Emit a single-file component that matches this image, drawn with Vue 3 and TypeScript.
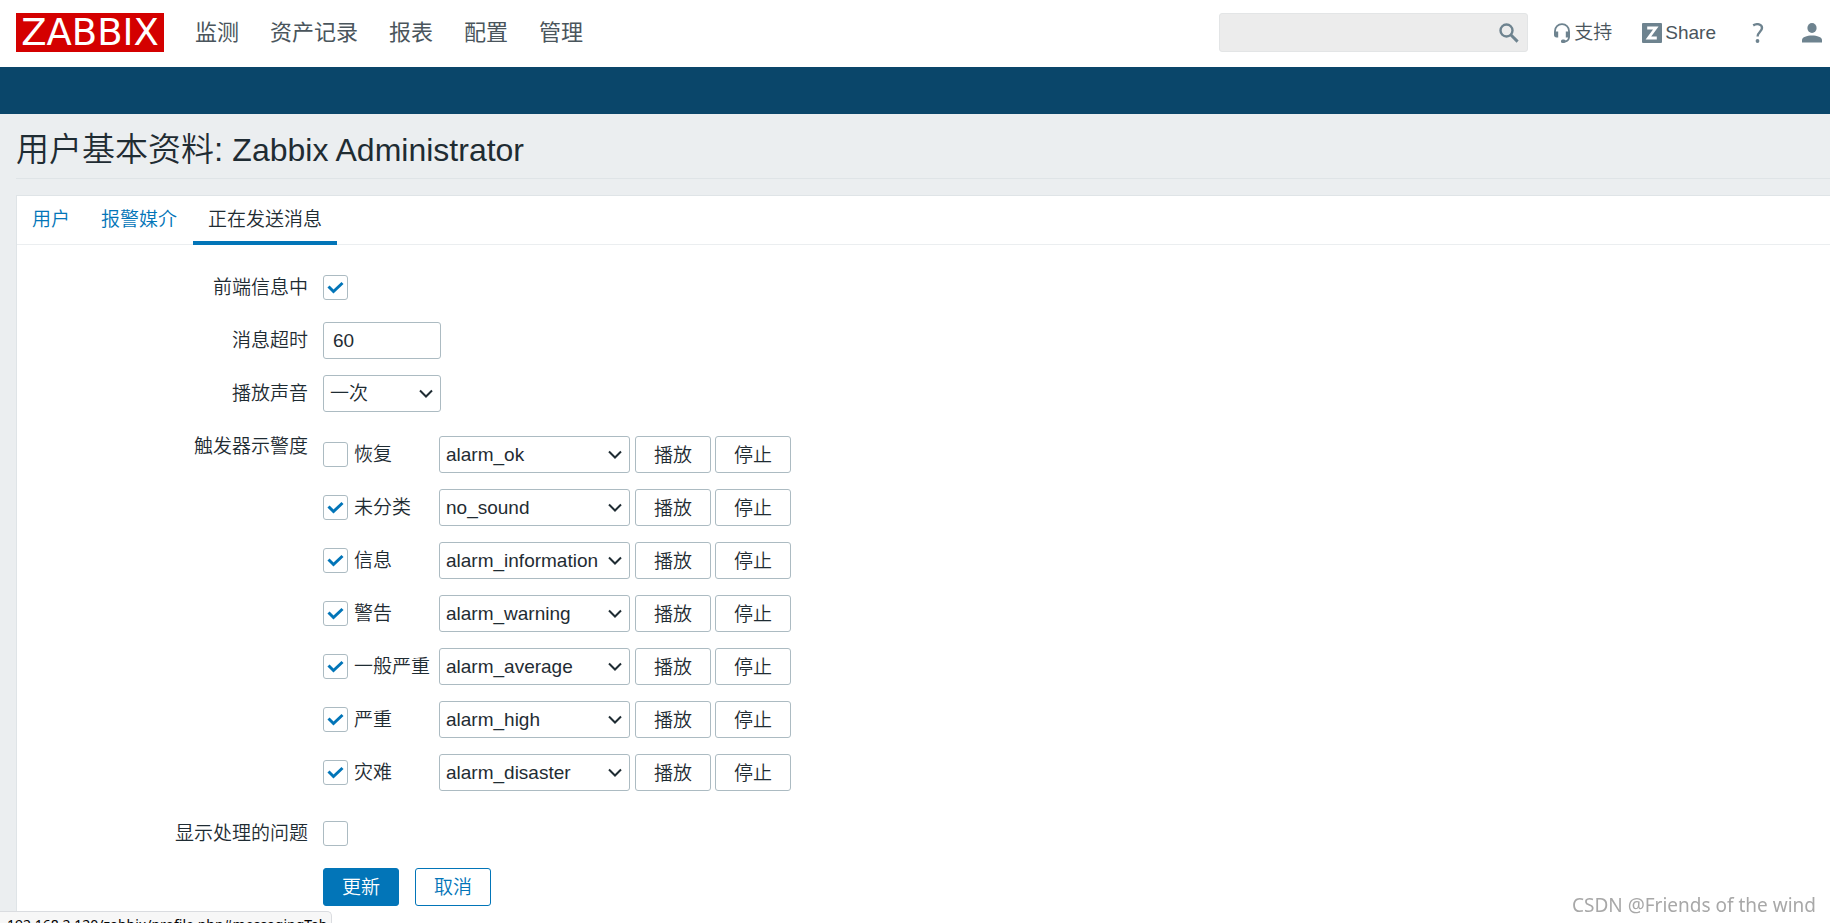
<script setup lang="ts">
import { ref } from 'vue'

interface Severity {
  id: string
  label: string
  enabled: boolean
  sound: string
}

const menu: string[] = ['监测', '资产记录', '报表', '配置', '管理']
const tabs: string[] = ['用户', '报警媒介', '正在发送消息']
const activeTab = ref('正在发送消息')

const sounds: string[] = [
  'alarm_ok',
  'no_sound',
  'alarm_information',
  'alarm_warning',
  'alarm_average',
  'alarm_high',
  'alarm_disaster',
]

const enabled = ref(true)
const timeout = ref('60')
const repeat = ref('一次')
const showSuppressed = ref(false)

const severities = ref<Severity[]>([
  { id: 'recovery', label: '恢复', enabled: false, sound: 'alarm_ok' },
  { id: 'unclassified', label: '未分类', enabled: true, sound: 'no_sound' },
  { id: 'information', label: '信息', enabled: true, sound: 'alarm_information' },
  { id: 'warning', label: '警告', enabled: true, sound: 'alarm_warning' },
  { id: 'average', label: '一般严重', enabled: true, sound: 'alarm_average' },
  { id: 'high', label: '严重', enabled: true, sound: 'alarm_high' },
  { id: 'disaster', label: '灾难', enabled: true, sound: 'alarm_disaster' },
])
</script>

<template>
  <div class="page">
    <header class="header">
      <a class="logo" href="#">ZABBIX</a>
      <nav class="menu">
        <a v-for="item in menu" :key="item" href="#">{{ item }}</a>
      </nav>
      <form class="search" role="search" @submit.prevent>
        <input type="text" aria-label="搜索" />
        <button type="submit" aria-label="搜索">
          <svg width="20" height="20" viewBox="0 0 20 20" fill="none" stroke="currentColor">
            <circle cx="7.5" cy="7.5" r="6" stroke-width="2.4" />
            <path d="M12 12l6.6 6.6" stroke-width="3" />
          </svg>
        </button>
      </form>
      <div class="tools">
        <a href="#" class="tool">
          <svg width="18" height="20" viewBox="0 0 18 20" fill="none" stroke="currentColor">
            <path d="M2 10V8C2 4 5 1.200 9 1.200s7 2.800 7 6.800V14c0 2.500-1.500 4-4 4.500" stroke-width="1.800" />
            <path d="M1 8.500h4.200v6H3.500C2 14.500 1 13.500 1 12zM17 8.500h-4.200v6H17z" fill="currentColor" stroke="none" />
            <rect x="8" y="16.500" width="4.500" height="3.500" rx="1.500" fill="currentColor" stroke="none" />
          </svg>
          <span>支持</span>
        </a>
        <a href="#" class="tool share">
          <svg width="20" height="20" viewBox="0 0 20 20">
            <rect width="20" height="20" rx="1" fill="currentColor" />
            <path d="M5.200 5h8.600L6.400 15h8.400" fill="none" stroke="#fff" stroke-width="2.800" />
          </svg>
          <span>Share</span>
        </a>
        <a href="#" class="tool help" aria-label="帮助">
          <svg width="12" height="20" viewBox="0 0 12 20" fill="none" stroke="currentColor">
            <path d="M1.200 2.400C5 .2 10 1 10 5c0 3.500-4.400 4.200-4.400 8.600" stroke-width="2.400" />
            <circle cx="5.500" cy="18" r="1.900" fill="currentColor" stroke="none" />
          </svg>
        </a>
        <a href="#" class="tool" aria-label="用户资料">
          <svg width="20" height="20" viewBox="0 0 20 20" fill="currentColor">
            <ellipse cx="10" cy="5" rx="4.600" ry="5" />
            <path d="M0 19.500v-2.500c0-3 5-4.500 10-4.500s10 1.500 10 4.500v2.500z" />
          </svg>
        </a>
      </div>
    </header>
    <div class="subnav"></div>

    <main class="content">
      <h1>用户基本资料: <span>Zabbix Administrator</span></h1>
      <section class="panel">
        <nav class="tabs">
          <a
            v-for="tab in tabs"
            :key="tab"
            href="#"
            :class="{ active: tab === activeTab }"
            @click.prevent="activeTab = tab"
            >{{ tab }}</a
          >
        </nav>
        <form class="form" @submit.prevent>
          <label class="name" for="enabled">前端信息中</label>
          <div class="field">
            <span class="check">
              <input id="enabled" v-model="enabled" type="checkbox" />
              <svg width="17" height="13" viewBox="0 0 17 13"><path d="M1.500 5.500l5 5 9-8.500" /></svg>
            </span>
          </div>

          <label class="name" for="timeout">消息超时</label>
          <div class="field">
            <input id="timeout" v-model="timeout" class="short text" type="text" />
          </div>

          <label class="name" for="repeat">播放声音</label>
          <div class="field">
            <span class="pick short">
              <select id="repeat" v-model="repeat">
                <option>一次</option>
              </select>
              <svg width="14" height="9" viewBox="0 0 14 9"><path d="M1 1.500l6 6 6-6" /></svg>
            </span>
          </div>

          <span id="severity-name" class="name severity-name">触发器示警度</span>
          <div class="severities" role="group" aria-labelledby="severity-name">
            <div v-for="row in severities" :key="row.id" class="severity">
              <label class="severity-label" :for="row.id">
                <span class="check">
                  <input :id="row.id" v-model="row.enabled" type="checkbox" />
                  <svg width="17" height="13" viewBox="0 0 17 13"><path d="M1.500 5.500l5 5 9-8.500" /></svg>
                </span>
                {{ row.label }}
              </label>
              <span class="pick sound">
                <select v-model="row.sound" :aria-label="row.label">
                  <option v-for="sound in sounds" :key="sound">{{ sound }}</option>
                </select>
                <svg width="14" height="9" viewBox="0 0 14 9"><path d="M1 1.500l6 6 6-6" /></svg>
              </span>
              <button type="button" class="button">播放</button>
              <button type="button" class="button">停止</button>
            </div>
          </div>

          <label class="name" for="suppressed">显示处理的问题</label>
          <div class="field">
            <span class="check">
              <input id="suppressed" v-model="showSuppressed" type="checkbox" />
              <svg width="17" height="13" viewBox="0 0 17 13"><path d="M1.500 5.500l5 5 9-8.500" /></svg>
            </span>
          </div>

          <div class="actions">
            <button type="submit" class="button primary">更新</button>
            <button type="button" class="button outline">取消</button>
          </div>
        </form>
      </section>
    </main>

    <div class="status">192.168.2.120/zabbix/profile.php#messagingTab</div>
    <div class="watermark">CSDN @Friends of the wind</div>
  </div>
</template>

<style>
body {
  margin: 0;
  background: #ebeef0;
}
</style>

<style scoped>
.page {
  display: flex;
  flex-direction: column;
  height: 100vh;
  overflow: hidden;
  color: #1f2c33;
  font: 350 19px/24px 'Liberation Sans', 'Noto Sans CJK SC', sans-serif;
}

.page * {
  box-sizing: border-box;
}

a {
  color: #0275b8;
  text-decoration: none;
}

input,
select,
button {
  margin: 0;
  font: inherit;
  color: inherit;
}

svg {
  display: block;
  flex: none;
}

.header {
  display: flex;
  flex: none;
  align-items: center;
  height: 67px;
  padding: 0 8px 2px 16px;
  background: #fff;
}

.logo {
  width: 148px;
  height: 39px;
  background: #d40000;
  color: #fff;
  font: 400 37px/39px 'DejaVu Sans', sans-serif;
  text-align: center;
}

.menu {
  display: flex;
  gap: 31px;
  margin-left: 31px;
  font-size: 22px;
  font-weight: 400;
}

.menu a {
  color: #4a555c;
}

.search {
  display: flex;
  align-items: center;
  width: 309px;
  height: 39px;
  margin-left: auto;
  padding-right: 8px;
  border: 1px solid #e3e5e6;
  border-radius: 3px;
  background: #ececec;
}

.search input {
  flex: 1;
  min-width: 0;
  border: 0;
  background: none;
  outline: 0;
}

.search button {
  padding: 0;
  border: 0;
  background: none;
  color: #6e838f;
}

.tools {
  display: flex;
  align-items: center;
  margin-left: 25px;
}

.tool {
  display: flex;
  align-items: center;
  gap: 3px;
  color: #6e838f;
}

.tool span {
  color: #4a555c;
}

.share {
  margin-left: 30px;
}

.help {
  margin: 0 38px 0 36px;
}

.subnav {
  flex: none;
  height: 47px;
  background: #0a466a;
}

.content {
  display: flex;
  flex: 1;
  flex-direction: column;
  padding-left: 16px;
}

h1 {
  margin: 0 0 16px;
  padding: 16px 0 8px;
  border-bottom: 1px solid #dfe4e7;
  font-size: 33px;
  font-weight: 350;
  line-height: 40px;
}

h1 span {
  font-size: 32px;
}

.panel {
  flex: 1;
  border: solid #dfe4e7;
  border-width: 1px 0 0 1px;
  background: #fff;
}

.tabs {
  display: flex;
  gap: 1px;
  border-bottom: 1px solid #ebeef0;
}

.tabs a {
  margin-bottom: -1px;
  padding: 12px 15px 9px;
  border-bottom: 4px solid transparent;
}

.tabs .active {
  border-color: #0275b8;
  color: #1f2c33;
}

.form {
  display: grid;
  grid-template-columns: 291px 1fr;
  gap: 16px 15px;
  padding-top: 24px;
}

.name {
  line-height: 37px;
  text-align: right;
}

.field {
  display: flex;
  align-items: center;
}

.check,
.pick {
  display: inline-grid;
}

.check > *,
.pick > * {
  grid-area: 1 / 1;
}

.check input {
  width: 25px;
  height: 25px;
  appearance: none;
  border: 1px solid #acbbc2;
  border-radius: 3px;
  background: #fff;
}

.check svg {
  place-self: center;
  visibility: hidden;
  fill: none;
  stroke: #0275b8;
  stroke-width: 3;
  pointer-events: none;
}

.check input:checked + svg {
  visibility: visible;
}

.text,
.pick select {
  width: 100%;
  height: 37px;
  padding: 0 9px;
  appearance: none;
  border: 1px solid #acbbc2;
  border-radius: 3px;
  background: #fff;
  outline: 0;
}

.pick select {
  padding: 0 6px;
}

.pick svg {
  place-self: center end;
  margin-right: 8px;
  fill: none;
  stroke: #1f2c33;
  stroke-width: 2;
  pointer-events: none;
}

.short.short {
  width: 118px;
}

.severity-name {
  align-self: start;
}

.severities {
  display: grid;
  gap: 16px;
  padding: 8px 0;
}

.severity {
  display: flex;
  gap: 4px;
}

.severity-label {
  display: flex;
  align-items: center;
  gap: 6px;
  width: 112px;
  white-space: nowrap;
}

.sound {
  width: 191px;
  margin-right: 1px;
}

.button {
  width: 76px;
  height: 37px;
  padding: 2px 0 0;
  border: 1px solid #acbbc2;
  border-radius: 3px;
  background: #fff;
}

.actions {
  display: flex;
  grid-column: 2;
  gap: 16px;
}

.actions .button {
  height: 38px;
}

.primary {
  border-color: #0275b8;
  background: #0275b8;
  color: #fff;
}

.outline {
  border-color: #0275b8;
  color: #0275b8;
}

.status {
  position: fixed;
  bottom: -14px;
  left: 0;
  height: 26px;
  box-sizing: border-box;
  padding: 0 4px 0 7px;
  border: solid #dadce0;
  border-width: 1px 1px 0 0;
  border-radius: 0 5px 0 0;
  background: #f7f7f7;
  color: #000;
  font: 400 14px/26px 'Noto Sans', sans-serif;
}

.watermark {
  position: fixed;
  right: 14px;
  bottom: 5px;
  color: #a8a8a8;
  font: 400 19px/26px 'Noto Sans', sans-serif;
  text-shadow: -1px -1px 0 #fff;
}
</style>
